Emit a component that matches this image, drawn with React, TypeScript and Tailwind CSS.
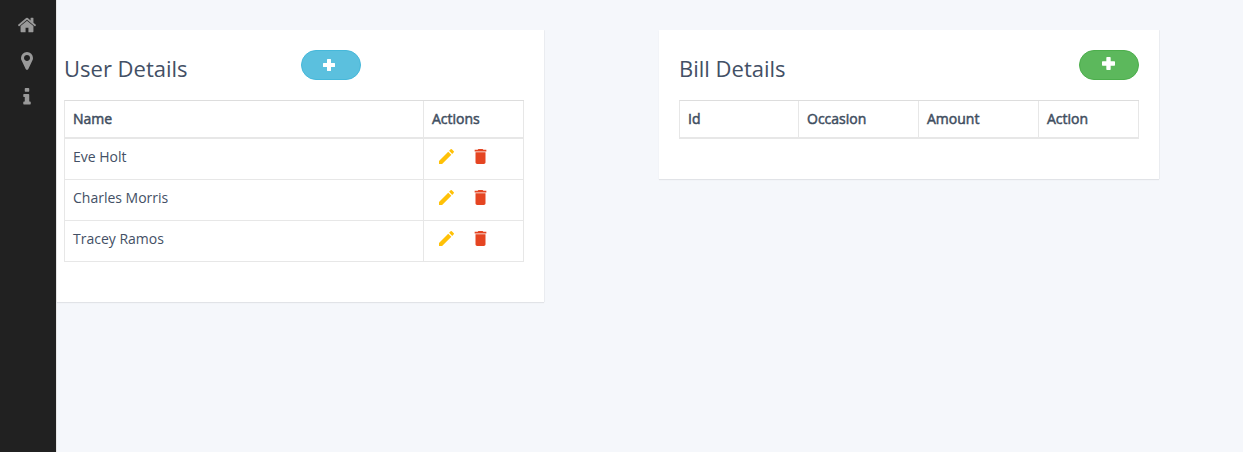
import type { ReactNode } from "react";
import { MdDelete, MdModeEdit } from "react-icons/md";

const HOME =
  "M1472 992v480q0 26-19 45t-45 19h-384v-384h-256v384h-384q-26 0-45-19t-19-45v-480q0-1 .5-3t.5-3l575-474 575 474q1 2 1 6zm223-69l-62 74q-8 9-21 11h-3q-13 0-21-7l-692-577-692 577q-12 8-24 7-13-2-21-11l-62-74q-8-10-7-23.5t11-21.5l719-599q32-26 76-26t76 26l244 204v-195q0-14 9-23t23-9h192q14 0 23 9t9 23v408l219 182q10 8 11 21.5t-7 23.5z";
const MARKER =
  "M1152 640q0-106-75-181t-181-75-181 75-75 181 75 181 181 75 181-75 75-181zm256 0q0 109-33 179l-364 774q-16 33-47.5 52t-67.5 19-67.5-19-46.5-52l-365-774q-33-70-33-179 0-212 150-362t362-150 362 150 150 362z";
const INFO =
  "M1216 1344v128q0 26-19 45t-45 19h-512q-26 0-45-19t-19-45v-128q0-26 19-45t45-19h64v-384h-64q-26 0-45-19t-19-45v-128q0-26 19-45t45-19h384q26 0 45 19t19 45v576h64q26 0 45 19t19 45zm-128-1152v192q0 26-19 45t-45 19h-256q-26 0-45-19t-19-45v-192q0-26 19-45t45-19h256q26 0 45 19t19 45z";

function NavIcon({ path, label, viewBox = "0 0 1792 1792" }: { path: string; label: string; viewBox?: string }) {
  return (
    <a aria-label={label} className="flex h-9 w-[54px] items-center justify-center text-[#999999]">
      <svg viewBox={viewBox} className="size-5" fill="currentColor">
        <path d={path} />
      </svg>
    </a>
  );
}

function Plus({ className }: { className: string }) {
  return (
    <svg viewBox="0 0 12 12" className={className} fill="white">
      <path d="M4.6 0h2.8q.6 0 .6.6V4h3.4q.6 0 .6.6v2.8q0 .6-.6.6H8v3.4q0 .6-.6.6H4.6q-.6 0-.6-.6V8H.6Q0 8 0 7.4V4.6Q0 4 .6 4H4V.6Q4 0 4.6 0z" />
    </svg>
  );
}

function Th({ children }: { children: ReactNode }) {
  return (
    <div className="border-r border-[#e7e7e7] px-2 py-2 leading-5">
      <span className="[-webkit-text-stroke:0.5px_#3e4d5c]">{children}</span>
    </div>
  );
}

const users = ["Eve Holt", "Charles Morris", "Tracey Ramos"];

export default function App() {
  return (
    <div className="flex h-[452px] overflow-hidden bg-[#f5f7fb] font-['Open_Sans',sans-serif] text-sm text-[#435065]">
      <nav className="flex w-[57px] shrink-0 flex-col border-r border-[#e5e5e5] bg-[#212121] pt-[7px]">
        <NavIcon path={HOME} label="Home" />
        <NavIcon path={MARKER} label="Location" viewBox="40 50 1712 1712" />
        <NavIcon path={INFO} label="Info" viewBox="40 40 1712 1712" />
      </nav>
      <main className="flex items-start gap-[115px] pt-[30px]">
        <section className="h-[272px] w-[487px] bg-white pt-5 pr-5 pl-[7px] shadow-[0_1px_1px_rgba(0,0,0,0.08),1px_0_0_rgba(0,0,0,0.03)]">
          <header className="flex h-[50px] items-start">
            <h2 className="w-[237px] pt-[3px] text-[22px] leading-[30px]">User Details</h2>
            <button className="flex h-[30px] w-[60px] items-center justify-center rounded-full border border-[#46b8da] bg-[#5bc0de] pr-[4px]">
              <Plus className="size-3" />
            </button>
          </header>
          <div className="w-[460px] border-t border-l border-t-[#dddddd] border-l-[#e7e7e7]">
            <div className="grid h-[38px] grid-cols-[359px_100px] border-b-2 border-[#e7e7e7]">
              <Th>Name</Th>
              <Th>Actions</Th>
            </div>
            {users.map((name) => (
              <div key={name} className="grid h-[41px] grid-cols-[359px_100px] border-b border-[#e7e7e7]">
                <div className="border-r border-[#e7e7e7] px-2 py-2 leading-5">{name}</div>
                <div className="flex gap-[15px] border-r border-[#e7e7e7] pt-2 pl-3">
                  <MdModeEdit viewBox="-0.6 0.6 24 24" className="size-5 text-[#ffc107]" />
                  <MdDelete viewBox="0.6 0.6 24 24" className="size-5 text-[#e54522]" />
                </div>
              </div>
            ))}
          </div>
        </section>
        <section className="h-[149px] w-[500px] bg-white px-5 pt-5 shadow-[0_1px_1px_rgba(0,0,0,0.08),1px_0_0_rgba(0,0,0,0.03)]">
          <header className="flex h-[50px] items-start justify-between">
            <h2 className="pt-[3px] text-[22px] leading-[30px]">Bill Details</h2>
            <button className="flex h-[30px] w-[60px] justify-center rounded-full border border-[#4cae4c] bg-[#5cb85c] pt-[6px] pr-px">
              <Plus className="size-[13px]" />
            </button>
          </header>
          <div className="grid h-[39px] w-[460px] grid-cols-[119px_120px_120px_100px] border-t border-b-2 border-l border-t-[#dddddd] border-b-[#e7e7e7] border-l-[#e7e7e7]">
            <Th>Id</Th>
            <Th>Occasion</Th>
            <Th>Amount</Th>
            <Th>Action</Th>
          </div>
        </section>
      </main>
    </div>
  );
}
